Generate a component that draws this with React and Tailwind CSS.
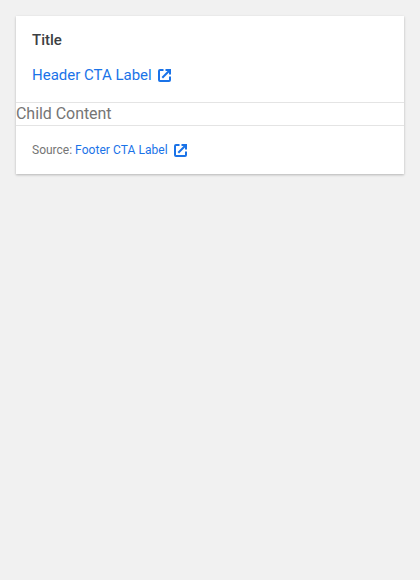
function ExternalIcon() {
  return (
    <svg className="ml-1.5 h-[13px] w-[13px] shrink-0" viewBox="0 0 13 13" fill="none" stroke="currentColor" strokeWidth="2">
      <path d="M5.5 1H2Q1 1 1 2V11Q1 12 2 12H11Q12 12 12 11V7.5" />
      <path d="M7.5 1H12V5.5M12 1L4.3 8.7" />
    </svg>
  );
}

export default function App() {
  return (
    <div className="min-h-screen bg-[#f1f1f1] p-4 font-['Roboto',sans-serif] text-base text-[#757575] antialiased">
      <div className="bg-white shadow-[0_1px_3px_rgba(0,0,0,0.12),0_1px_2px_rgba(0,0,0,0.14)]">
        <header className="flex h-[87px] flex-col items-start border-b border-[#e4e4e4] px-4 pt-3">
          <h3 className="text-[15px] leading-6 font-medium text-[#3c4043]">Title</h3>
          <a href="#" className="mt-[11px] flex items-center text-[15px] leading-6 text-[#1a73e8]">
            Header CTA Label
            <ExternalIcon />
          </a>
        </header>
        <div className="h-[22px] leading-[22px] tracking-[-0.05px]">Child Content</div>
        <footer className="flex h-[49px] items-center border-t border-[#e4e4e4] px-4 text-xs">
          Source:&nbsp;
          <a href="#" className="flex items-center tracking-[0.06px] text-[#1a73e8]">
            Footer CTA Label
            <ExternalIcon />
          </a>
        </footer>
      </div>
    </div>
  );
}
